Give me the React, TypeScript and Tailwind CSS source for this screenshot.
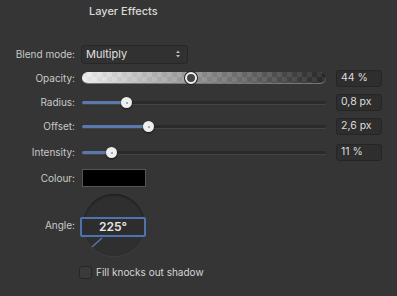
import React from 'react'

const font = { fontFamily: 'Inter, "Liberation Sans", sans-serif' }

function Label({ children }: { children: React.ReactNode }) {
  return <div className="w-[76px] shrink-0 pr-[1px] text-right text-[10px] text-[#c9c9c9]">{children}</div>
}

function ValueBox({ value }: { value: string }) {
  return (
    <div className="ml-[10px] flex h-[17px] w-[46px] items-center rounded-[3px] border border-[#252525] bg-[#2e2e2e] pl-[4px] text-[10.5px] text-[#dcdcdc]">
      {value}
    </div>
  )
}

function Slider({ pos }: { pos: number }) {
  return (
    <div className="relative h-[18px] w-[244px]">
      <div className="absolute left-0 right-0 top-[8px] h-[3px] rounded-full bg-[#2a2a2a] shadow-[0_1px_0_#444]" />
      <div className="absolute left-0 top-[8px] h-[3px] rounded-full bg-[#5b78a8]" style={{ width: pos }} />
      <div
        className="absolute top-[4px] flex h-[11px] w-[11px] items-center justify-center rounded-full bg-[#eeeeee] shadow-[0_1px_2px_rgba(0,0,0,0.6)]"
        style={{ left: pos - 5 }}
      >
        <div className="h-[2px] w-[2px] rounded-full bg-[#7d95c0]" />
      </div>
    </div>
  )
}

export default function App() {
  return (
    <div className="h-[296px] w-[397px] overflow-hidden bg-[#353535]" style={font}>
      <div className="pt-[4px] pl-[89px] text-[11px] font-medium leading-[15px] text-[#dadada]">Layer Effects</div>

      {/* blend mode */}
      <div className="mt-[26px] flex h-[18px] items-center">
        <Label>Blend mode:</Label>
        <div className="ml-[5px] flex h-[19px] w-[107px] items-center justify-between rounded-[3px] border border-[#272727] bg-[#313131] pl-[4px] pr-[6px] text-[11px] text-[#e0e0e0]">
          <span>Multiply</span>
          <svg width="6" height="10" viewBox="0 0 6 10">
            <path d="M1 4 L3 1.5 L5 4 Z" fill="#bbb" />
            <path d="M1 6 L3 8.5 L5 6 Z" fill="#bbb" />
          </svg>
        </div>
      </div>

      {/* opacity */}
      <div className="mt-[6px] flex h-[18px] items-center">
        <Label>Opacity:</Label>
        <div className="relative ml-[6px] h-[12px] w-[244px] overflow-visible">
          <div className="absolute inset-0 rounded-full border-b border-[#777] [background:linear-gradient(to_right,rgba(255,255,255,0.85),rgba(20,20,20,0.75)),repeating-conic-gradient(#9c9c9c_0_25%,#5e5e5e_0_50%)_0_0/10px_10px]" />
          <div className="absolute left-[103px] top-[0px] h-[12px] w-[12px] rounded-full border-[2px] border-[#f0f0f0] bg-[#444] shadow-[0_0_0_1px_#222]" />
        </div>
        <ValueBox value="44 %" />
      </div>

      {/* radius */}
      <div className="mt-[6px] flex h-[18px] items-center">
        <Label>Radius:</Label>
        <div className="ml-[6px]">
          <Slider pos={44} />
        </div>
        <ValueBox value="0,8 px" />
      </div>

      {/* offset */}
      <div className="mt-[6px] flex h-[18px] items-center">
        <Label>Offset:</Label>
        <div className="ml-[6px]">
          <Slider pos={66} />
        </div>
        <ValueBox value="2,6 px" />
      </div>

      {/* intensity */}
      <div className="mt-[8px] flex h-[18px] items-center">
        <Label>Intensity:</Label>
        <div className="ml-[6px]">
          <Slider pos={29} />
        </div>
        <ValueBox value="11 %" />
      </div>

      {/* colour */}
      <div className="mt-[8px] flex h-[18px] items-center">
        <Label>Colour:</Label>
        <div className="ml-[6px] h-[18px] w-[64px] border border-[#555] bg-black" />
      </div>

      {/* angle */}
      <div className="mt-[7px] flex h-[62px] items-center">
        <Label>Angle:</Label>
        <div className="relative ml-[4px] h-[62px] w-[66px]">
          <div className="absolute left-[3px] top-0 h-[62px] w-[62px] rounded-full bg-[#2f2f2f] shadow-[inset_0_1px_2px_rgba(0,0,0,0.5),0_1px_0_#3e3e3e]" />
          <svg className="absolute left-0 top-0" width="66" height="62">
            <line x1="12" y1="53" x2="22" y2="44" stroke="#5b78a8" strokeWidth="1.3" />
          </svg>
          <div className="absolute left-0 top-[23px] flex h-[20px] w-[66px] items-center justify-center rounded-[2px] border-[2px] border-[#4d74ad] bg-[#2d2d2d] text-[12px] font-semibold text-[#e8e8e8]">
            225°
          </div>
        </div>
      </div>

      {/* checkbox */}
      <div className="mt-[9px] flex items-center pl-[79px]">
        <div className="h-[13px] w-[13px] rounded-[3px] border border-[#262626] bg-[#3a3a3a]" />
        <span className="ml-[4px] text-[10px] text-[#d6d6d6]">Fill knocks out shadow</span>
      </div>
    </div>
  )
}
